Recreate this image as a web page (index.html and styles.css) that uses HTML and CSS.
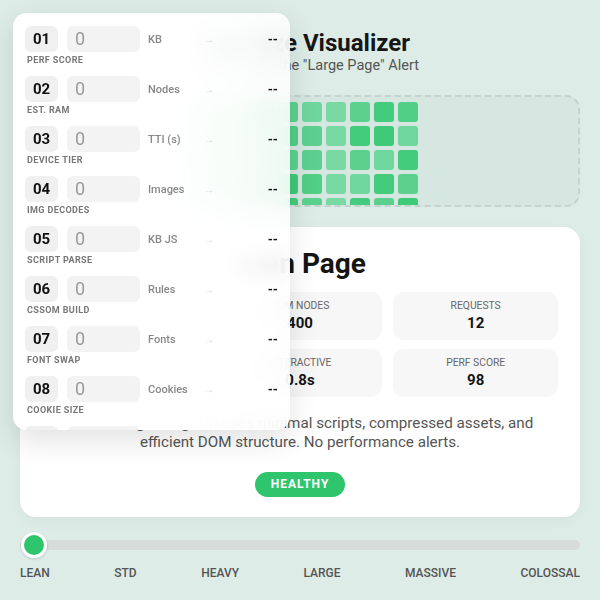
FILE: index.html
```html
<!DOCTYPE html>
<html lang="en">
<head>
<meta charset="utf-8">
<title>Page Size Visualizer</title>
<link rel="stylesheet" href="styles.css">
</head>
<body>
<main class="app">
  <header class="header">
    <h1 class="title">Page Size Visualizer</h1>
    <p class="subtitle">Understanding the "Large Page" Alert</p>
  </header>

  <section class="viz">
    <div class="cells">
      <span></span><span></span><span></span><span></span><span></span><span></span><span></span><span></span><span></span><span></span><span></span><span></span><span></span><span></span><span></span><span></span>
      <span></span><span></span><span></span><span></span><span></span><span></span><span></span><span></span><span></span><span></span><span></span><span></span><span></span><span></span><span></span><span></span>
      <span></span><span></span><span></span><span></span><span></span><span></span><span></span><span></span><span></span><span></span><span></span><span></span><span></span><span></span><span></span><span></span>
      <span></span><span></span><span></span><span></span><span></span><span></span><span></span><span></span><span></span><span></span><span></span><span></span><span></span><span></span><span></span><span></span>
      <span></span><span></span><span></span><span></span><span></span><span></span><span></span><span></span><span></span><span></span><span></span><span></span><span></span><span></span><span></span><span></span>
      <span></span><span></span><span></span><span></span><span></span><span></span><span></span><span></span><span></span><span></span><span></span><span></span><span></span><span></span><span></span><span></span>
    </div>
  </section>

  <section class="card">
    <h2 class="card-title">Lean Page</h2>
    <div class="stats">
      <div class="stat"><div class="stat-label">Page Size</div><div class="stat-value">180 KB</div></div>
      <div class="stat"><div class="stat-label">DOM Nodes</div><div class="stat-value">400</div></div>
      <div class="stat"><div class="stat-label">Requests</div><div class="stat-value">12</div></div>
      <div class="stat"><div class="stat-label">Load Time</div><div class="stat-value">0.6s</div></div>
      <div class="stat"><div class="stat-label">Interactive</div><div class="stat-value">0.8s</div></div>
      <div class="stat"><div class="stat-label">Perf Score</div><div class="stat-value">98</div></div>
    </div>
    <p class="desc">Fast and lightweight, it uses minimal scripts, compressed assets, and efficient DOM structure. No performance alerts.</p>
    <span class="badge">HEALTHY</span>
  </section>

  <section class="slider">
    <div class="track"><span class="thumb"></span></div>
    <div class="ticks">
      <span>LEAN</span><span>STD</span><span>HEAVY</span><span>LARGE</span><span>MASSIVE</span><span>COLOSSAL</span>
    </div>
  </section>
</main>

<aside class="panel">
  <div class="row"><div class="line"><span class="num">01</span><span class="input">0</span><span class="unit">KB</span><span class="arrow">→</span><span class="out">--</span></div><div class="row-label">PERF SCORE</div></div>
  <div class="row"><div class="line"><span class="num">02</span><span class="input">0</span><span class="unit">Nodes</span><span class="arrow">→</span><span class="out">--</span></div><div class="row-label">EST. RAM</div></div>
  <div class="row"><div class="line"><span class="num">03</span><span class="input">0</span><span class="unit">TTI (s)</span><span class="arrow">→</span><span class="out">--</span></div><div class="row-label">DEVICE TIER</div></div>
  <div class="row"><div class="line"><span class="num">04</span><span class="input">0</span><span class="unit">Images</span><span class="arrow">→</span><span class="out">--</span></div><div class="row-label">IMG DECODES</div></div>
  <div class="row"><div class="line"><span class="num">05</span><span class="input">0</span><span class="unit">KB JS</span><span class="arrow">→</span><span class="out">--</span></div><div class="row-label">SCRIPT PARSE</div></div>
  <div class="row"><div class="line"><span class="num">06</span><span class="input">0</span><span class="unit">Rules</span><span class="arrow">→</span><span class="out">--</span></div><div class="row-label">CSSOM BUILD</div></div>
  <div class="row"><div class="line"><span class="num">07</span><span class="input">0</span><span class="unit">Fonts</span><span class="arrow">→</span><span class="out">--</span></div><div class="row-label">FONT SWAP</div></div>
  <div class="row"><div class="line"><span class="num">08</span><span class="input">0</span><span class="unit">Cookies</span><span class="arrow">→</span><span class="out">--</span></div><div class="row-label">COOKIE SIZE</div></div>
  <div class="row"><div class="line"><span class="num"></span><span class="input"></span></div></div>
</aside>
</body>
</html>
```

FILE: styles.css
```css
* { box-sizing: border-box; }

html, body {
  margin: 0;
  padding: 0;
}

body {
  background: #ddece6;
  font-family: Roboto, "Liberation Sans", Arial, sans-serif;
  color: #111;
  width: 600px;
  height: 600px;
  overflow: hidden;
}

.app {
  width: 560px;
  margin: 0 auto;
  padding-top: 30px;
}

.header {
  text-align: center;
}

.title {
  margin: 0;
  font-size: 24px;
  line-height: 27px;
  font-weight: 700;
  color: #161616;
}

.subtitle {
  margin: 0;
  font-size: 14.5px;
  line-height: 18px;
  color: #555;
}

.viz {
  margin-top: 20px;
  height: 112px;
  border: 2px dashed #c4d3cd;
  border-radius: 14px;
  background: #d6e6e0;
  padding: 5px 16px 0;
  overflow: hidden;
}

.cells {
  display: grid;
  grid-template-columns: repeat(16, 20px);
  grid-auto-rows: 20px;
  gap: 4px;
}

.cells span {
  border-radius: 3px;
  background: #5cd18e;
}
.cells span:nth-child(3n) { background: #42cc7b; }
.cells span:nth-child(5n+2) { background: #6fd69d; }
.cells span:nth-child(7n+3) { background: #3fca77; }
.cells span:nth-child(4n+1) { background: #78d9a3; }
.cells span:nth-child(11n+5) { background: #52cf86; }

.card {
  margin-top: 20px;
  height: 290px;
  background: #fff;
  border-radius: 16px;
  box-shadow: 0 4px 14px rgba(0, 0, 0, 0.04);
  padding: 20px 22px 20px;
  text-align: center;
}

.card-title {
  margin: 0;
  font-size: 28px;
  line-height: 34px;
  font-weight: 700;
  color: #151515;
}

.stats {
  margin-top: 11px;
  display: grid;
  grid-template-columns: repeat(3, 1fr);
  gap: 9px 11px;
}

.stat {
  height: 48px;
  background: #f7f7f7;
  border-radius: 10px;
  padding-top: 7px;
}

.stat-label {
  font-size: 10.3px;
  line-height: 13px;
  text-transform: uppercase;
  color: #666;
}

.stat-value {
  margin-top: 2px;
  font-size: 15px;
  line-height: 18px;
  font-weight: 700;
  color: #151515;
}

.desc {
  margin: 17px auto 0;
  max-width: 500px;
  font-size: 15.2px;
  line-height: 19px;
  color: #555;
}

.badge {
  display: inline-block;
  margin-top: 20px;
  width: 90px;
  height: 25px;
  line-height: 25px;
  border-radius: 13px;
  background: #2fc56d;
  color: #fff;
  font-size: 12px;
  font-weight: 700;
  letter-spacing: 1px;
}

.slider {
  margin-top: 15px;
}

.track {
  position: relative;
  height: 26px;
  display: flex;
  align-items: center;
}

.track::before {
  content: "";
  display: block;
  width: 100%;
  height: 10px;
  border-radius: 5px;
  background: #d7dcda;
}

.thumb {
  position: absolute;
  left: 1px;
  top: 0;
  width: 26px;
  height: 26px;
  border-radius: 50%;
  background: #2fc56d;
  border: 3px solid #fff;
  box-shadow: 0 1px 3px rgba(0, 0, 0, 0.15);
}

.ticks {
  margin-top: 8px;
  display: flex;
  justify-content: space-between;
  font-size: 12px;
  line-height: 14px;
  font-weight: 500;
  color: #555;
}

/* overlay panel */
.panel {
  position: absolute;
  left: 13px;
  top: 13px;
  width: 277px;
  height: 417px;
  overflow: hidden;
  border-radius: 14px;
  padding: 13px 12px 0;
  background: linear-gradient(90deg, #fff 0%, #fff 58%, rgba(255, 255, 255, 0.86) 100%);
  backdrop-filter: blur(10px);
  box-shadow: 0 10px 30px rgba(0, 0, 0, 0.12);
}

.row {
  margin-bottom: 10px;
}

.line {
  display: flex;
  align-items: center;
  height: 26px;
}

.num {
  width: 33px;
  height: 26px;
  border-radius: 6px;
  background: #f0f0f0;
  font-size: 15px;
  font-weight: 700;
  line-height: 26px;
  text-align: center;
  color: #111;
}

.input {
  margin-left: 9px;
  width: 73px;
  height: 26px;
  border-radius: 6px;
  background: #f3f3f3;
  padding-left: 8px;
  font-size: 18px;
  line-height: 26px;
  color: #9a9a9a;
}

.unit {
  margin-left: 8px;
  width: 52px;
  font-size: 11px;
  font-weight: 500;
  color: #888;
  white-space: nowrap;
}

.arrow {
  width: 18px;
  text-align: center;
  font-size: 10px;
  color: #cfcfcf;
}

.out {
  flex: 1;
  text-align: right;
  font-size: 13px;
  font-weight: 700;
  color: #111;
}

.row-label {
  margin-top: 3px;
  padding-left: 2px;
  font-size: 9px;
  line-height: 11px;
  font-weight: 700;
  letter-spacing: 0.4px;
  color: #777;
}
```
